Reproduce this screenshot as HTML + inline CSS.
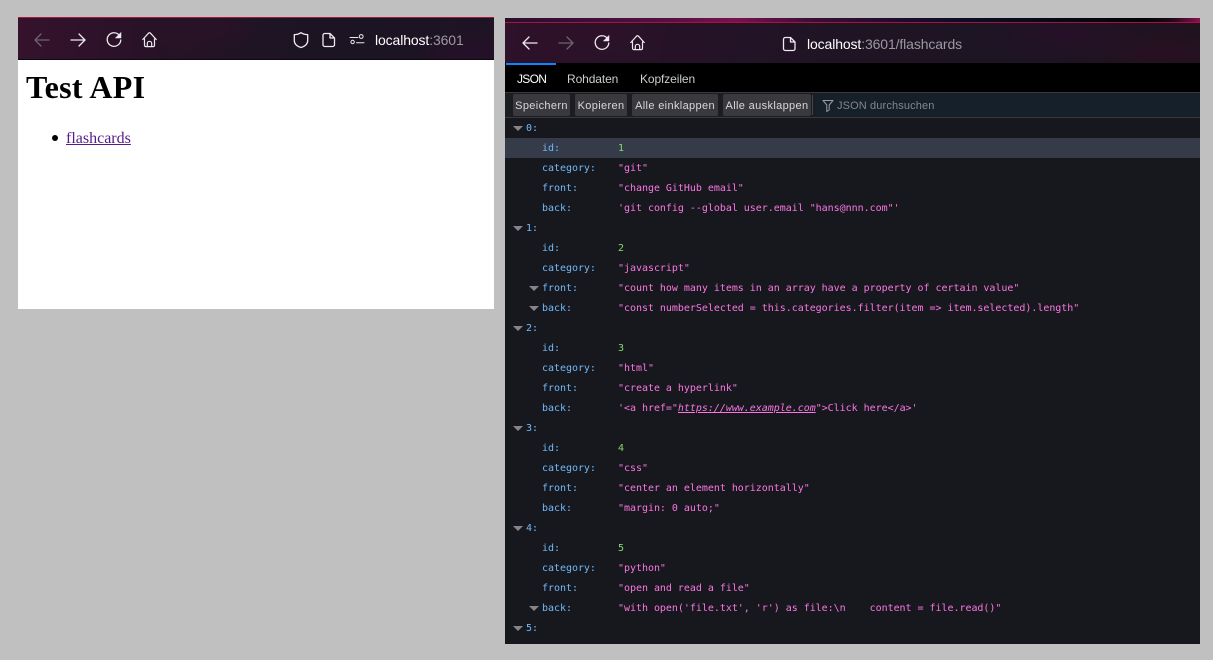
<!DOCTYPE html>
<html><head><meta charset="utf-8"><title>Test API</title>
<style>
html,body{margin:0;padding:0}
body{width:1213px;height:660px;background:#c0c0c0;position:relative;overflow:hidden;font-family:"Liberation Sans",sans-serif}
.a{position:absolute}
svg{position:absolute;overflow:visible;fill:none;stroke-linecap:round;stroke-linejoin:round}
.tb1{left:18px;top:18px;width:476px;height:41px;background:radial-gradient(ellipse 60px 30px at 190px 10px,#2a1226,transparent),radial-gradient(ellipse 50px 22px at 450px 35px,#26102a,transparent),linear-gradient(100deg,#36122d 0%,#291227 25%,#1e1424 50%,#1b1422 72%,#1f1324 100%);border-bottom:1px solid #0c0a10}
.tb2{left:505px;top:23px;width:695px;height:40px;background:radial-gradient(ellipse 70px 24px at 90px 8px,#2e1128,transparent),radial-gradient(ellipse 90px 22px at 560px 12px,#261028,transparent),radial-gradient(ellipse 80px 20px at 660px 30px,#281022,transparent),linear-gradient(100deg,#2e112a 0%,#261227 25%,#1e1424 50%,#1d1424 70%,#21121f 100%)}
.url{font-size:14px;line-height:18px;color:#fff;white-space:nowrap;letter-spacing:-.12px}
.url span{color:#9c98a0}
.tab{font-size:12px;top:71px;line-height:16px;color:#c8d0c8;white-space:nowrap}
.btn{top:94px;height:22px;background:#3a3a3e;border-radius:2px;color:#d8d8dc;font-size:11px;line-height:25px;text-align:center;white-space:nowrap;letter-spacing:.35px}
.row{position:absolute;left:0;width:695px;height:20px;line-height:22px;font-family:"DejaVu Sans Mono",monospace;font-size:10px;letter-spacing:-.03px;white-space:pre}
.k,.t,.v,.n{top:0}
.k{position:absolute;left:37px;color:#72bafa}
.t{position:absolute;left:21px;color:#72bafa}
.v{position:absolute;left:113px;color:#fb76e2}
.n{position:absolute;left:113px;color:#84da72}
.tw{position:absolute;top:8px;width:0;height:0;border-left:5px solid transparent;border-right:5px solid transparent;border-top:5.500px solid #858589}
.tw.o{left:7.500px}.tw.i{left:23.500px}
i{font-style:italic;text-decoration:underline}
</style></head><body>

<!-- left window -->
<div class="a" style="left:18px;top:17px;width:476px;height:292px;background:#fff"></div>
<div class="a tb1"></div>
<div class="a" style="left:18px;top:17px;width:476px;height:1px;background:#a8183c"></div>
<svg class="a" style="left:0;top:0" width="500" height="60" stroke-width="1.3">
<path d="M35 40H49M35 40l6-6M35 40l6 6" stroke="#6e6470"/>
<path d="M71 40H85M85 40l-6-6M85 40l-6 6" stroke="#efeaf0"/>
<path d="M119.500 35.500A6.800 6.800 0 1 0 120.800 40" stroke="#efeaf0"/><path d="M115.500 38h5.500v-5.500z" fill="#efeaf0" stroke="#efeaf0" stroke-width=".5"/>
<path d="M142.800 39.500l5.700-6.300a1.300 1.300 0 0 1 2 0l5.700 6.300M144.500 38.500v6.800a1.300 1.300 0 0 0 1.300 1.300h7.400a1.300 1.300 0 0 0 1.300-1.300v-6.800M147.300 46.600v-3.100a2.200 2.200 0 0 1 4.400 0v3.100" stroke="#efeaf0" stroke-width="1.200"/>
<path d="M301 32.700c2 1.300 4.500 1.900 6.700 2v5.800c0 3.700-2.700 5.800-6.700 7-4-1.200-6.700-3.300-6.700-7v-5.800c2.200-.1 4.700-.7 6.700-2z" stroke="#efeaf0"/>
<path d="M324.800 33.500h5.200l4.500 4.500v6.700a1.800 1.800 0 0 1-1.800 1.800h-7.900a1.800 1.800 0 0 1-1.800-1.800v-9.400a1.800 1.800 0 0 1 1.800-1.800zM330 33.500v4.500h4.500" stroke="#efeaf0" stroke-width="1.300"/>
<circle cx="352.600" cy="42" r="1.700" stroke="#efeaf0" stroke-width="1"/><circle cx="361.200" cy="36.500" r="1.900" stroke="#efeaf0" stroke-width="1"/>
<path d="M350 37.500h8M356.500 42.700h7.500" stroke="#efeaf0" stroke-width="1"/>
</svg>
<div class="a url" style="left:375px;top:31px">localhost<span>:3601</span></div>
<div class="a" style="left:26px;top:69px;font-family:'Liberation Serif',serif;font-weight:bold;font-size:32px;letter-spacing:.28px;line-height:37px;color:#000">Test API</div>
<div class="a" style="left:52px;top:135px;width:6px;height:6px;border-radius:50%;background:#000"></div>
<div class="a" style="left:66px;top:130px;font-family:'Liberation Serif',serif;font-size:16px;line-height:18px;color:#551a8b;text-decoration:underline;text-decoration-skip-ink:none">flashcards</div>

<!-- right window -->
<div class="a" style="left:505px;top:18px;width:695px;height:626px;background:#17181e"></div>
<div class="a" style="left:505px;top:18px;width:695px;height:4px;background:linear-gradient(90deg,#2a0e2c 0%,#3e0f38 12%,#5a0f44 24%,#7c0f50 33%,#3a0e34 45%,#1c0c2c 58%,#0c0c22 68%,#0a0816 80%,#040306 92%,#20081a 96%,#8c1050 100%)"></div>
<div class="a tb2"></div>
<div class="a" style="left:505px;top:22px;width:695px;height:1px;background:#a01640"></div>
<svg class="a" style="left:0;top:0" width="1200" height="64" stroke-width="1.3">
<path d="M523 43H537M523 43l6-6M523 43l6 6" stroke="#efeaf0"/>
<path d="M559 43H573M573 43l-6-6M573 43l-6 6" stroke="#6e6470"/>
<path d="M607.500 38.500A6.800 6.800 0 1 0 608.800 43" stroke="#efeaf0"/><path d="M603.500 41h5.500v-5.500z" fill="#efeaf0" stroke="#efeaf0" stroke-width=".5"/>
<path d="M630.800 42.500l5.700-6.300a1.300 1.300 0 0 1 2 0l5.700 6.300M632.500 41.500v6.800a1.300 1.300 0 0 0 1.300 1.300h7.400a1.300 1.300 0 0 0 1.300-1.300v-6.800M635.300 49.600v-3.100a2.200 2.200 0 0 1 4.400 0v3.100" stroke="#efeaf0" stroke-width="1.200"/>
<path d="M785.300 37.500h5.200l4.500 4.500v6.700a1.800 1.800 0 0 1-1.800 1.800h-7.900a1.800 1.800 0 0 1-1.800-1.800v-9.400a1.800 1.800 0 0 1 1.800-1.800zM790.500 37.500v4.500h4.500" stroke="#efeaf0" stroke-width="1.300"/>
</svg>
<div class="a url" style="left:807px;top:35px">localhost<span>:3601/flashcards</span></div>

<!-- tabs -->
<div class="a" style="left:505px;top:63px;width:695px;height:29px;background:#000"></div>
<div class="a" style="left:506px;top:63px;width:50px;height:2px;background:#0a84ff"></div>
<div class="a tab" style="left:517px;color:#fff;letter-spacing:-.7px">JSON</div>
<div class="a tab" style="left:567px;letter-spacing:-.1px">Rohdaten</div>
<div class="a tab" style="left:640px;letter-spacing:-.1px">Kopfzeilen</div>

<!-- toolbar -->
<div class="a" style="left:505px;top:92px;width:695px;height:26px;background:#1c1d22;border-top:1px solid #38383d;border-bottom:1px solid #38383d;box-sizing:border-box"></div>
<div class="a btn" style="left:513px;width:57px">Speichern</div>
<div class="a btn" style="left:575px;width:52px">Kopieren</div>
<div class="a btn" style="left:632px;width:86px">Alle einklappen</div>
<div class="a btn" style="left:723px;width:88px">Alle ausklappen</div>
<div class="a" style="left:812px;top:95px;width:1px;height:20px;background:#45454a"></div>
<div class="a" style="left:815px;top:94px;width:385px;height:22px;background:#16202a"></div>
<svg class="a" style="left:0;top:0" width="840" height="116" stroke-width="1">
<path d="M823 100.500h10l-3.800 4.500v5l-2.400 1.500v-6.500z" stroke="#9a9aa0"/>
</svg>
<div class="a" style="left:837px;top:94px;font-size:11px;line-height:25px;letter-spacing:.13px;color:#85858b;white-space:nowrap">JSON durchsuchen</div>

<!-- json rows -->
<div class="a" style="left:505px;top:118px;width:695px;height:526px;overflow:hidden">
<div class="row" style="top:0"><b class="tw o"></b><span class="t">0:</span></div>
<div class="row" style="top:20px;background:#353b48"><span class="k">id:</span><span class="n">1</span></div>
<div class="row" style="top:40px"><span class="k">category:</span><span class="v">"git"</span></div>
<div class="row" style="top:60px"><span class="k">front:</span><span class="v">"change GitHub email"</span></div>
<div class="row" style="top:80px"><span class="k">back:</span><span class="v">'git config --global user.email "hans@nnn.com"'</span></div>
<div class="row" style="top:100px"><b class="tw o"></b><span class="t">1:</span></div>
<div class="row" style="top:120px"><span class="k">id:</span><span class="n">2</span></div>
<div class="row" style="top:140px"><span class="k">category:</span><span class="v">"javascript"</span></div>
<div class="row" style="top:160px"><b class="tw i"></b><span class="k">front:</span><span class="v">"count how many items in an array have a property of certain value"</span></div>
<div class="row" style="top:180px"><b class="tw i"></b><span class="k">back:</span><span class="v">"const numberSelected = this.categories.filter(item =&gt; item.selected).length"</span></div>
<div class="row" style="top:200px"><b class="tw o"></b><span class="t">2:</span></div>
<div class="row" style="top:220px"><span class="k">id:</span><span class="n">3</span></div>
<div class="row" style="top:240px"><span class="k">category:</span><span class="v">"html"</span></div>
<div class="row" style="top:260px"><span class="k">front:</span><span class="v">"create a hyperlink"</span></div>
<div class="row" style="top:280px"><span class="k">back:</span><span class="v">'&lt;a href="<i>https://www.example.com</i>"&gt;Click here&lt;/a&gt;'</span></div>
<div class="row" style="top:300px"><b class="tw o"></b><span class="t">3:</span></div>
<div class="row" style="top:320px"><span class="k">id:</span><span class="n">4</span></div>
<div class="row" style="top:340px"><span class="k">category:</span><span class="v">"css"</span></div>
<div class="row" style="top:360px"><span class="k">front:</span><span class="v">"center an element horizontally"</span></div>
<div class="row" style="top:380px"><span class="k">back:</span><span class="v">"margin: 0 auto;"</span></div>
<div class="row" style="top:400px"><b class="tw o"></b><span class="t">4:</span></div>
<div class="row" style="top:420px"><span class="k">id:</span><span class="n">5</span></div>
<div class="row" style="top:440px"><span class="k">category:</span><span class="v">"python"</span></div>
<div class="row" style="top:460px"><span class="k">front:</span><span class="v">"open and read a file"</span></div>
<div class="row" style="top:480px"><b class="tw i"></b><span class="k">back:</span><span class="v">"with open('file.txt', 'r') as file:\n    content = file.read()"</span></div>
<div class="row" style="top:500px"><b class="tw o"></b><span class="t">5:</span></div>
</div>
</body></html>
